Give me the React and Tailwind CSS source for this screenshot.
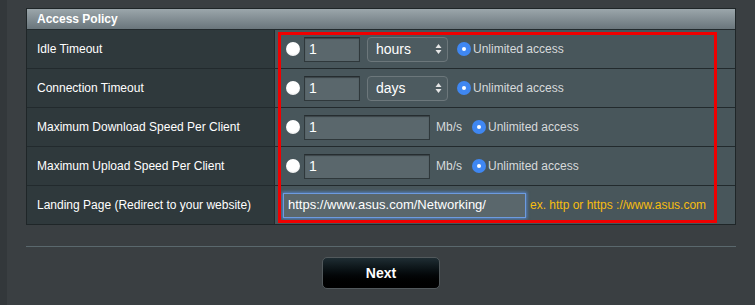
export default function App() {
  const font = "font-['Liberation_Sans',Arial,sans-serif]";

  const Radio = () => (
    <span className="w-[14px] h-[14px] rounded-full bg-[radial-gradient(circle_at_50%_40%,#ffffff_55%,#d8d8d8)] shrink-0" />
  );

  const BlueRadio = () => (
    <span className="w-[14px] h-[14px] rounded-full bg-[#3f87f2] flex items-center justify-center shrink-0">
      <span className="w-[4px] h-[4px] rounded-full bg-white" />
    </span>
  );

  const Input = ({ w, value }) => (
    <div
      className={`${w} h-[25px] bg-[#5a676c] border border-[#2f383b] border-t-[#262d30] shadow-[inset_0_1px_1px_rgba(0,0,0,0.35)] flex items-center pl-[4px] text-[14px] text-white`}
    >
      {value}
    </div>
  );

  const Select = ({ value }) => (
    <div className="w-[81px] h-[25px] rounded-[4px] border border-[#6c777b] bg-[#4d5b60] flex items-center justify-between pl-[8px] pr-[5px] text-[14px] text-white">
      <span>{value}</span>
      <svg width="7" height="12" viewBox="0 0 7 12">
        <path d="M3.5 1 L6.5 5 L0.5 5 Z" fill="#e6e6e6" />
        <path d="M3.5 11 L6.5 7 L0.5 7 Z" fill="#e6e6e6" />
      </svg>
    </div>
  );

  const Unlimited = () => (
    <div className="flex items-center gap-[2px]">
      <BlueRadio />
      <span className="text-[12px] text-[#d7dadb]">Unlimited access</span>
    </div>
  );

  const Row = ({ label, last, children }) => (
    <div className={`flex ${last ? "h-[38px]" : "h-[39px] border-b border-[#222a2d]"}`}>
      <div className="w-[248px] border-r border-[#222a2d] bg-[#2f393c] flex items-center pl-[10px] text-[12px] text-white">
        {label}
      </div>
      <div className="flex-1 bg-[#48565b] flex items-center">{children}</div>
    </div>
  );

  return (
    <div className={`w-[755px] h-[305px] bg-[#3a3f42] flex overflow-hidden ${font}`}>
      <div className="w-[7px] h-full bg-[#33383b]" />
      <div className="relative ml-[19px] w-[710px] pt-[8px]">
        <div className="border border-[#1f2628]">
          <div className="h-[21px] border-b border-[#222a2d] bg-gradient-to-b from-[#9ba6ab] to-[#6a767c] flex items-center pl-[10px] text-[12px] font-bold text-white">
            Access Policy
          </div>
          <Row label="Idle Timeout">
            <div className="flex items-center pl-[11px]">
              <Radio />
              <div className="ml-[4px]"><Input w="w-[56px]" value="1" /></div>
              <div className="ml-[7px]"><Select value="hours" /></div>
              <div className="ml-[9px]"><Unlimited /></div>
            </div>
          </Row>
          <Row label="Connection Timeout">
            <div className="flex items-center pl-[11px]">
              <Radio />
              <div className="ml-[4px]"><Input w="w-[56px]" value="1" /></div>
              <div className="ml-[7px]"><Select value="days" /></div>
              <div className="ml-[9px]"><Unlimited /></div>
            </div>
          </Row>
          <Row label="Maximum Download Speed Per Client">
            <div className="flex items-center pl-[11px]">
              <Radio />
              <div className="ml-[4px]"><Input w="w-[126px]" value="1" /></div>
              <span className="ml-[6px] text-[12px] text-[#d7dadb]">Mb/s</span>
              <div className="ml-[10px]"><Unlimited /></div>
            </div>
          </Row>
          <Row label="Maximum Upload Speed Per Client">
            <div className="flex items-center pl-[11px]">
              <Radio />
              <div className="ml-[4px]"><Input w="w-[126px]" value="1" /></div>
              <span className="ml-[6px] text-[12px] text-[#d7dadb]">Mb/s</span>
              <div className="ml-[10px]"><Unlimited /></div>
            </div>
          </Row>
          <Row label="Landing Page (Redirect to your website)" last>
            <div className="flex items-center pl-[8px]">
              <div className="w-[243px] h-[25px] bg-[#5a676c] border border-[#6d9be0] shadow-[0_0_3px_1px_rgba(90,150,240,0.7)] flex items-center pl-[4px] text-[13px] text-white">
                https://www.asus.com/Networking/
              </div>
              <span className="ml-[4px] text-[12px] text-[#f7bd10]">ex. http or https ://www.asus.com</span>
            </div>
          </Row>
        </div>

        <div className="mt-[21px] h-px bg-[#5a686d]" />

        <div className="flex justify-center mt-[10px]">
          <button className="w-[118px] h-[32px] rounded-[5px] border border-[#52595c] bg-gradient-to-b from-[#1f2d33] to-[#000000] text-white text-[14px] font-bold">
            Next
          </button>
        </div>

        <div className="absolute left-[252px] top-[32px] w-[439px] h-[191px] border-[3px] border-[#f00000] pointer-events-none" />
      </div>
    </div>
  );
}
